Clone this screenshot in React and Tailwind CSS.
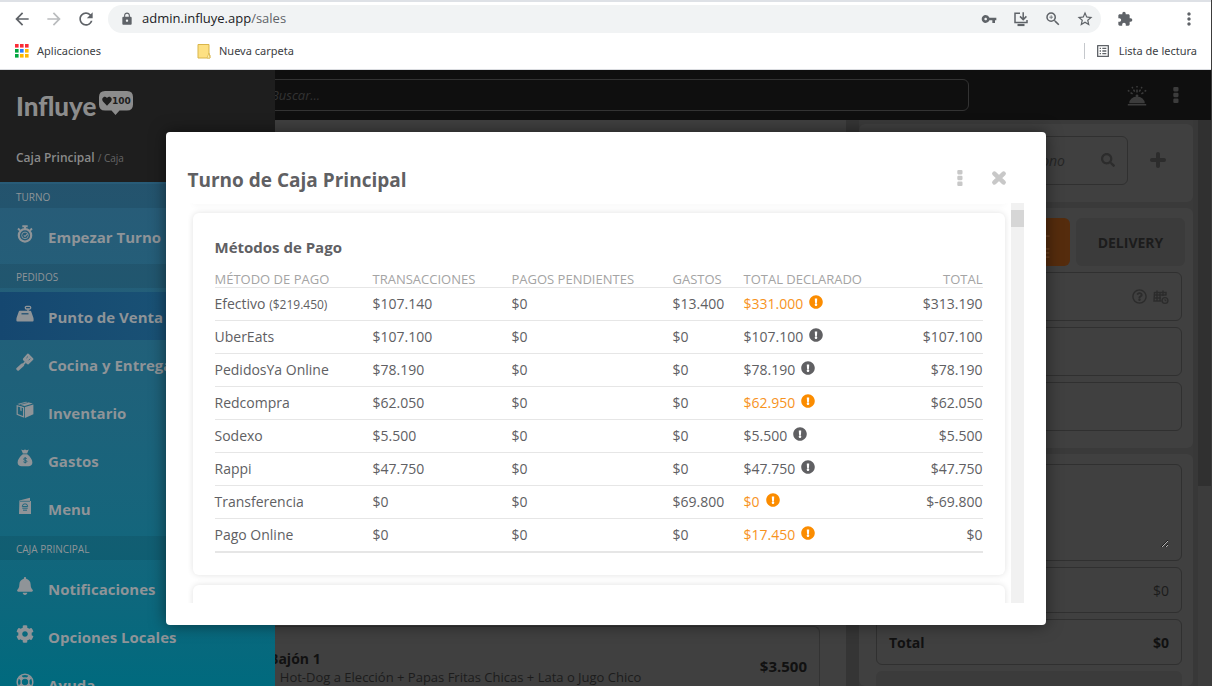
import React from 'react';
import {
  MdArrowBack,
  MdArrowForward,
  MdRefresh,
  MdLock,
  MdVpnKey,
  MdZoomIn,
  MdStarBorder,
  MdExtension,
  MdMoreVert,
  MdOutlineListAlt,
} from 'react-icons/md';
import { FaBell, FaCog, FaSearch, FaExclamationCircle, FaRegQuestionCircle } from 'react-icons/fa';

const payments = [
  { name: 'Efectivo', note: '($219.450)', transactions: '$107.140', pending: '$0', expenses: '$13.400', declared: '$331.000', warn: true, total: '$313.190' },
  { name: 'UberEats', transactions: '$107.100', pending: '$0', expenses: '$0', declared: '$107.100', warn: false, total: '$107.100' },
  { name: 'PedidosYa Online', transactions: '$78.190', pending: '$0', expenses: '$0', declared: '$78.190', warn: false, total: '$78.190' },
  { name: 'Redcompra', transactions: '$62.050', pending: '$0', expenses: '$0', declared: '$62.950', warn: true, total: '$62.050' },
  { name: 'Sodexo', transactions: '$5.500', pending: '$0', expenses: '$0', declared: '$5.500', warn: false, total: '$5.500' },
  { name: 'Rappi', transactions: '$47.750', pending: '$0', expenses: '$0', declared: '$47.750', warn: false, total: '$47.750' },
  { name: 'Transferencia', transactions: '$0', pending: '$0', expenses: '$69.800', declared: '$0', warn: true, total: '$-69.800' },
  { name: 'Pago Online', transactions: '$0', pending: '$0', expenses: '$0', declared: '$17.450', warn: true, total: '$0' },
];

const appDots = [
  'fill-red-500', 'fill-red-500', 'fill-red-500',
  'fill-green-600', 'fill-blue-500', 'fill-amber-400',
  'fill-green-600', 'fill-amber-400', 'fill-amber-400',
];

function AppsIcon() {
  return (
    <svg viewBox="0 0 14 14" className="size-3.5" aria-hidden="true">
      {appDots.map((color, i) => (
        <rect key={i} x={(i % 3) * 5} y={Math.floor(i / 3) * 5} width="3.6" height="3.6" className={color} />
      ))}
    </svg>
  );
}

function FolderIcon() {
  return (
    <svg viewBox="0 0 14 16" className="h-4 w-3.5" aria-hidden="true">
      <path d="M1 1.5h11V11l1 1v3H1z" fill="#fde082" stroke="#d9b54a" />
      <path d="M10 15l2-5 1 5z" fill="#fff3c0" stroke="#d9b54a" strokeWidth="0.7" />
    </svg>
  );
}

function InstallIcon() {
  return (
    <svg viewBox="0 0 16 16" className="size-[18px] p-px" fill="none" stroke="currentColor" strokeWidth="1.5" aria-hidden="true">
      <path d="M7 2.200H2v9.300h12V9" />
      <path d="M4.500 14h7" strokeWidth="2.2" />
      <path d="M10.200 1.200v7M7 5.400l3.200 3.200 3.200-3.200" />
    </svg>
  );
}

function DotsIcon() {
  return (
    <svg viewBox="0 0 6 18" className="h-[18px] w-1.5" fill="currentColor" aria-hidden="true">
      <rect x="0.3" y="1" width="5.2" height="4.4" rx="1.1" />
      <rect x="0.3" y="6.8" width="5.2" height="4.4" rx="1.1" />
      <rect x="0.3" y="12.6" width="5.2" height="4.4" rx="1.1" />
    </svg>
  );
}

function CloseIcon() {
  return (
    <svg viewBox="0 0 16 16" className="size-4" stroke="currentColor" strokeWidth="4.6" strokeLinecap="round" aria-hidden="true">
      <path d="M3.400 3.600l9.200 8.800M12.600 3.600l-9.200 8.800" />
    </svg>
  );
}

function PlusIcon() {
  return (
    <svg viewBox="0 0 16 16" className="size-4" stroke="currentColor" strokeWidth="4" strokeLinecap="round" aria-hidden="true">
      <path d="M8 2v12M2 8h12" />
    </svg>
  );
}

function ServiceBellIcon() {
  return (
    <svg viewBox="0 0 20 21" className="h-[21px] w-5" fill="currentColor" aria-hidden="true">
      <path d="M.8 19h18.400v1.600H.8zM2.200 18.200a7.800 6.800 0 0 1 15.600 0z" />
      <circle cx="10" cy="10.800" r="1.400" />
      <path d="M10 1v1.600M10 4.400v3M5 2l.8 1.300M6.500 4.600l1.200 2M15 2l-.8 1.300M13.500 4.600l-1.200 2M.8 5.400l1.600 1M3.600 7.600l2 1.300M19.200 5.400l-1.600 1M16.400 7.600l-2 1.300" stroke="currentColor" strokeWidth="1.500" />
    </svg>
  );
}

function ScheduleIcon() {
  return (
    <svg viewBox="0 0 16 16" className="size-4" fill="none" stroke="currentColor" strokeWidth="1.4" aria-hidden="true">
      <path d="M1.500 3.500h11.500v3M1.500 3l-.5 9h7.500M1.500 6H13M4 1.500V12M7 3v9M10 1.500V7M1 9h7" />
      <circle cx="12" cy="11.500" r="2.900" />
      <path d="M12 10v1.700h1.400" strokeWidth="1" />
    </svg>
  );
}

function StopwatchIcon() {
  return (
    <svg viewBox="0 0 18 18" className="size-[18px]" fill="none" stroke="currentColor" aria-hidden="true">
      <circle cx="9" cy="10.400" r="6.200" strokeWidth="2.200" />
      <circle cx="9" cy="10.400" r="3.300" strokeWidth="0.900" />
      <path d="M7.800 10.400l1.200 1.100 2.400-2.700" strokeWidth="1.100" />
      <path d="M6.300 1.300h5.400M9 1.300v3M2 3.600l2 1.800M16 3.600l-2 1.800" strokeWidth="2" />
    </svg>
  );
}

function RegisterIcon() {
  return (
    <svg viewBox="0 0 18 18" className="size-[18px]" fill="currentColor" aria-hidden="true">
      <path d="M3.800 5.800h10.400q.8 0 1 .8l2.200 6.200q.2.700.2 1.400v1.400q0 1-1 1H1.400q-1 0-1-1v-1.400q0-.7.200-1.400l2.200-6.200q.2-.8 1-.8z" />
      <rect x="9.300" y="1.400" width="5.400" height="2.600" rx="1.200" fill="none" stroke="currentColor" strokeWidth="1.300" />
      <path d="M12 4.200v2" stroke="currentColor" strokeWidth="1.500" />
      <path d="M5.500 8.800h7" stroke="#174b70" strokeWidth="1.200" />
    </svg>
  );
}

function SpatulaIcon() {
  return (
    <svg viewBox="0 0 18 18" className="size-[18px]" fill="currentColor" aria-hidden="true">
      <path d="M11.300.8q.8-.6 1.600.2l4.200 4.200q.7.8.1 1.600l-4.600 4.400q-.8.500-1.600-.2L7.200 7.200q-.7-.8-.1-1.700z" />
      <path d="M9.400 9.200l-2 2" stroke="currentColor" strokeWidth="1.800" />
      <path d="M6.400 12L2 15.900" stroke="currentColor" strokeWidth="3.400" strokeLinecap="round" />
      <path d="M12 3.500l-1.600 1.600M14.300 5.600l-1.700 1.700" stroke="#2a6078" strokeWidth="0.800" />
    </svg>
  );
}

function BoxIcon() {
  return (
    <svg viewBox="0 0 18 18" className="size-[18px]" fill="currentColor" aria-hidden="true">
      <path d="M9 5.900l8.400-2.400v9.700L9 17z" />
      <path d="M1.400 2.900L10 .8l6.800 1.600L8.600 5z" />
      <path d="M.6 4l7.600 2.200v10.500L.6 13.800zM1.800 5.500v7.500l5.200 2V7z" fillRule="evenodd" />
      <path d="M4.300 5v4.600l1.300.6V5.400z" />
      <path d="M4 3.600l8.200-2.200" stroke="#246078" strokeWidth="0.700" />
    </svg>
  );
}

function MoneyBagIcon() {
  return (
    <svg viewBox="0 0 18 18" className="size-[18px]" fill="currentColor" aria-hidden="true">
      <path d="M5.200.6l2 .7L9 .6l1.800.7 2-.7-1.700 4H6.900zM6.800 5.300h4.400c3 2.400 5.200 5.200 5.200 8.200 0 2.700-1.800 3.700-3.900 3.700h-7c-2.100 0-3.900-1-3.900-3.700 0-3 2.200-5.800 5.200-8.200z" />
      <path d="M10.800 9.600c-1-.9-3.300-.6-3.200.6.100 1.300 3.300.8 3.300 2.200 0 1.200-2.400 1.400-3.500.4M9.200 8.200v6.200" fill="none" stroke="#1c6178" strokeWidth="0.900" />
    </svg>
  );
}

function MenuCardIcon() {
  return (
    <svg viewBox="0 0 18 18" className="size-[18px]" fill="currentColor" aria-hidden="true">
      <path d="M3.400 3.600L14 .8v3.200h1V17H3z" />
      <path d="M4 4.300h10" stroke="#18637a" strokeWidth="0.700" />
      <path d="M6.300 9.500a2.700 2.700 0 0 1 5.400 0zM6.300 11.200h5.400M7 13.200h4" fill="none" stroke="#18637a" strokeWidth="0.900" />
    </svg>
  );
}

function LifeRingIcon() {
  return (
    <svg viewBox="0 0 18 18" className="size-[18px]" fill="none" stroke="currentColor" aria-hidden="true">
      <circle cx="9" cy="9" r="7.800" strokeWidth="1.500" />
      <circle cx="9" cy="9" r="3.900" strokeWidth="1.500" />
      <path d="M3.800 3.800l2.500 2.500M14.200 3.800l-2.500 2.500M3.800 14.200l2.500-2.500M14.200 14.200l-2.500-2.500" strokeWidth="4" />
    </svg>
  );
}

const sections = [
  {
    title: 'TURNO',
    items: [{ label: 'Empezar Turno', icon: StopwatchIcon }],
  },
  {
    title: 'PEDIDOS',
    items: [
      { label: 'Punto de Venta', icon: RegisterIcon, active: true },
      { label: 'Cocina y Entrega', icon: SpatulaIcon },
      { label: 'Inventario', icon: BoxIcon },
      { label: 'Gastos', icon: MoneyBagIcon },
      { label: 'Menu', icon: MenuCardIcon },
    ],
  },
  {
    title: 'CAJA PRINCIPAL',
    items: [
      { label: 'Notificaciones', icon: FaBell },
      { label: 'Opciones Locales', icon: FaCog },
      { label: 'Ayuda', icon: LifeRingIcon },
    ],
  },
];

function BrowserBar() {
  return (
    <header className="h-[70px] shrink-0 border-t-2 border-b border-t-[#dee1e6] border-b-[#dadce0] bg-white text-[#5f6368]">
      <div className="flex h-[34px] items-center pl-3">
        <button aria-label="Atrás" className="mr-3"><MdArrowBack className="size-5" /></button>
        <button aria-label="Adelante" className="mr-3 text-[#babcbe]"><MdArrowForward className="size-5" /></button>
        <button aria-label="Recargar" className="mr-3"><MdRefresh className="size-5" /></button>
        <div className="flex h-7 flex-1 items-center rounded-full bg-[#f1f3f4] pr-[7px] pl-3">
          <MdLock className="mr-2 size-3.5" />
          <p className="flex-1 text-[13px]">
            <span className="text-[#202124]">admin.influye.app</span>/sales
          </p>
          <div className="flex items-center gap-3.5">
            <MdVpnKey className="size-[18px] p-px" />
            <InstallIcon />
            <MdZoomIn className="size-[18px]" />
            <MdStarBorder className="size-[18px]" />
          </div>
        </div>
        <button aria-label="Extensiones" className="ml-4"><MdExtension className="size-4" /></button>
        <button aria-label="Más" className="mr-3 ml-[46px]"><MdMoreVert className="size-5" /></button>
      </div>
      <div className="flex h-[30px] items-center pr-3.5 pl-[15px] font-['Noto_Sans',sans-serif] text-[11px] text-[#3c4043]">
        <a href="#aplicaciones" className="mr-24 flex items-center gap-2"><AppsIcon />Aplicaciones</a>
        <a href="#carpeta" className="flex items-center gap-2"><FolderIcon />Nueva carpeta</a>
        <a href="#lista" className="ml-auto flex h-4 items-center gap-2 border-l border-[#c5c8cc] pl-2.5">
          <MdOutlineListAlt className="size-4 text-[#5f6368]" />
          Lista de lectura
        </a>
      </div>
    </header>
  );
}

function TopBar() {
  return (
    <div className="flex h-[50px] shrink-0 items-center bg-[#0f0f0f] pr-8 pl-[260px]">
      <input
        type="text"
        aria-label="Buscar"
        placeholder="Buscar..."
        className="h-8 min-w-0 flex-1 rounded-md border border-[#333] bg-transparent px-2.5 text-[13px] italic placeholder:text-[#333]"
      />
      <div className="ml-[158px] flex items-center gap-[26px] text-[#3c3c3c]">
        <button aria-label="Pedidos listos"><ServiceBellIcon /></button>
        <button aria-label="Opciones"><DotsIcon /></button>
      </div>
    </div>
  );
}

function Sidebar() {
  return (
    <aside className="absolute inset-y-0 left-0 w-[275px] overflow-hidden bg-linear-to-b from-[#2c5876] to-[#006a7e]">
      <div className="flex h-28 flex-col bg-[#1e1e1e] px-4 pt-5">
        <div className="flex items-start gap-[3px] text-[#8c8c8c]">
          <span className="font-['Lato'] text-[26px] leading-8 font-black">Influye</span>
          <svg viewBox="0 0 34 26" className="h-[26px] w-[34px]" role="img" aria-label="100">
            <path d="M6 1h22q6 0 6 6v7.500q0 6-6 6h-7.500L16.500 25l-4-4.500H6q-6 0-6-6V7q0-6 6-6z" fill="#8c8c8c" />
            <path d="M8 15.800l-4-4.400C1.600 8.600 5.500 4.800 8 7.900c2.500-3.100 6.400.7 4 3.500z" fill="#1e1e1e" />
            <text x="13" y="14" fontSize="9" fontWeight="700" fill="#1e1e1e" fontFamily="DejaVu Sans, sans-serif">100</text>
          </svg>
        </div>
        <p className="mt-6 text-[12px] leading-6 font-semibold text-[#8a8a8a]">
          Caja Principal <span className="text-[10px] font-normal text-[#666]">/ Caja</span>
        </p>
      </div>
      <nav className="pt-0.5">
        {sections.map((section) => (
          <div key={section.title}>
            <h2 className="h-6 bg-black/8 px-4 text-[10px] leading-[26px] text-[#8f9498]">{section.title}</h2>
            <ul className="py-1">
              {section.items.map(({ label, icon: Icon, active }) => (
                <li key={label}>
                  <a
                    href="#menu"
                    className={`flex h-12 items-center gap-3.5 px-4 pt-0.5 text-[15px] font-bold whitespace-nowrap text-[#8f9498] ${
                      active ? 'bg-linear-to-r from-[#154770] to-[#1c5878]' : ''
                    }`}
                  >
                    <span className="flex h-6 w-[18px] shrink-0 justify-center"><Icon className="size-[18px]" /></span>
                    {label}
                  </a>
                </li>
              ))}
            </ul>
          </div>
        ))}
      </nav>
    </aside>
  );
}

function Products() {
  return (
    <section className="flex flex-1 flex-col justify-end bg-[#404040] pl-[252px]">
      <article className="mr-[26px] flex h-[60px] items-center rounded-t-md border border-b-0 border-[#333] pr-3 pl-4">
        <div className="flex-1 pt-5">
          <h3 className="text-[14px] leading-5 font-bold text-[#111]">Bajón 1</h3>
          <p className="text-[13px] leading-4 text-[#1c1c1c]">1 Hot-Dog a Elección + Papas Fritas Chicas + Lata o Jugo Chico</p>
        </div>
        <strong className="pt-5 text-[15px] text-[#111]">$3.500</strong>
      </article>
    </section>
  );
}

function Order() {
  return (
    <section className="flex w-[334px] shrink-0 flex-col gap-1.5 bg-[#3a3a3a] pt-1 text-[14px] text-[#1c1c1c]">
      <div className="flex h-[78px] shrink-0 items-center gap-[22px] rounded-md bg-[#404040] pr-7 pb-1.5 pl-[17px]">
        <label className="flex h-[49px] flex-1 items-center rounded-md border border-[#303030] px-3">
          <input
            type="text"
            aria-label="Teléfono"
            placeholder="Buscar cliente por teléfono"
            className="min-w-0 flex-1 bg-transparent text-right italic placeholder:text-[#262626]"
          />
          <FaSearch className="ml-9 size-3.5 text-[#2c2c2c]" />
        </label>
        <button aria-label="Agregar cliente" className="text-[#2c2c2c]"><PlusIcon /></button>
      </div>
      <div className="flex h-[240px] shrink-0 flex-col gap-1.5 rounded-md bg-[#404040] pt-2.5 pr-2 pl-[17px]">
        <div className="flex h-12 shrink-0 gap-1.5 font-bold">
          <button className="flex-1 rounded-md bg-[#552c0d] pr-5 text-right text-[#6b4020]">RETIRO EN LOCAL TIENDE</button>
          <button className="w-[109px] rounded-md bg-[#3b3b3b]">DELIVERY</button>
        </div>
        <div className="flex flex-col gap-1.5 pr-[3px]">
          <div className="flex h-[49px] items-center justify-end gap-1.5 rounded-md border border-[#303030] pr-3 text-[#2c2c2c]">
            <FaRegQuestionCircle className="size-[15px]" />
            <ScheduleIcon />
          </div>
          <div className="h-[49px] rounded-md border border-[#303030]" />
          <div className="h-[49px] rounded-md border border-[#303030]" />
        </div>
      </div>
      <div className="flex flex-1 flex-col gap-1.5 overflow-hidden rounded-md bg-[#404040] pt-2.5 pr-[11px] pl-[17px]">
        <div className="h-[97px] shrink-0 rounded-md border border-[#303030] p-3">
          <textarea aria-label="Comentarios" className="block size-full resize bg-transparent" />
        </div>
        <div className="flex h-[46px] shrink-0 items-center justify-between rounded-md border border-[#303030] px-3">
          <span>Descuento</span><span>$0</span>
        </div>
        <div className="flex h-[46px] shrink-0 items-center justify-between rounded-md border border-[#303030] px-3 font-bold text-[#111]">
          <span>Total</span><span>$0</span>
        </div>
        <div className="flex-1 rounded-t-md bg-[#3b3b3b]" />
      </div>
    </section>
  );
}

function ShiftModal() {
  return (
    <div className="absolute inset-0 flex items-center justify-center">
      <div role="dialog" aria-label="Turno de Caja Principal" className="w-full max-w-[880px] rounded-sm bg-white px-[22px] pb-[22px] text-[#606063] shadow-[0_0_16px_rgba(0,0,0,0.5)]">
        <div className="flex h-[71px] items-center pt-[26px] pr-[17px]">
          <h1 className="flex-1 text-[19px] leading-6 font-bold">Turno de Caja Principal</h1>
          <div className="flex items-center gap-7 pb-1 text-[#c8c8c8]">
            <button aria-label="Más opciones"><DotsIcon /></button>
            <button aria-label="Cerrar"><CloseIcon /></button>
          </div>
        </div>
        <div className="flex h-[400px] overflow-hidden">
          <div className="flex-1 overflow-hidden pr-1.5 pl-[5px]">
            <div className="mb-[9px] h-px rounded-b-md bg-white shadow-[0_0_6px_rgba(0,0,0,0.16)]" />
            <div className="mb-2.5 h-[362px] rounded-md bg-white px-[22px] pt-[22px] shadow-[0_0_6px_rgba(0,0,0,0.12)]">
              <h2 className="mb-2 text-[15px] leading-6 font-bold">Métodos de Pago</h2>
              <table className="w-full table-fixed text-left text-[14px] leading-5">
                <thead>
                  <tr className="h-[21px] border-b border-[#e6e6e6] align-bottom text-[13px] leading-4 text-[#a4a4a4]">
                    <th className="w-[158px] font-normal">MÉTODO DE PAGO</th>
                    <th className="w-[139px] font-normal">TRANSACCIONES</th>
                    <th className="w-[161px] font-normal">PAGOS PENDIENTES</th>
                    <th className="w-[71px] font-normal">GASTOS</th>
                    <th className="w-[139px] font-normal">TOTAL DECLARADO</th>
                    <th className="text-right font-normal">TOTAL</th>
                  </tr>
                </thead>
                <tbody>
                  {payments.map((p) => (
                    <tr key={p.name} className="h-[33px] border-b border-[#e6e6e6] last:border-b-2">
                      <td>
                        {p.name} {p.note && <span className="text-[12px]">{p.note}</span>}
                      </td>
                      <td>{p.transactions}</td>
                      <td>{p.pending}</td>
                      <td>{p.expenses}</td>
                      <td>
                        <span className={`flex items-center gap-1.5 ${p.warn ? 'text-[#f7931e]' : ''}`}>
                          {p.declared}
                          <FaExclamationCircle className={`mb-1 size-3.5 ${p.warn ? 'text-[#fb8c00]' : ''}`} />
                        </span>
                      </td>
                      <td className="text-right">{p.total}</td>
                    </tr>
                  ))}
                </tbody>
              </table>
            </div>
            <div className="h-20 rounded-md bg-white shadow-[0_0_6px_rgba(0,0,0,0.12)]" />
          </div>
          <div className="w-[13px] bg-[#f1f1f1] pt-[7px]">
            <div className="h-[17px] bg-[#d6d6d6]" />
          </div>
        </div>
      </div>
    </div>
  );
}

export default function App() {
  return (
    <div className="flex h-screen flex-col overflow-hidden border-r border-[#3c3c3c] font-['Open_Sans','Noto_Sans',sans-serif]">
      <BrowserBar />
      <main className="relative flex min-h-0 flex-1 flex-col">
        <TopBar />
        <div className="flex min-h-0 flex-1 bg-[#383838]">
          <Products />
          <div className="w-[13px] bg-[#353535]" />
          <Order />
          <div className="ml-[5px] w-[13px] bg-[#3c3c3c]">
            <div className="h-[366px] bg-[#303030]" />
          </div>
        </div>
        <Sidebar />
        <ShiftModal />
      </main>
    </div>
  );
}
